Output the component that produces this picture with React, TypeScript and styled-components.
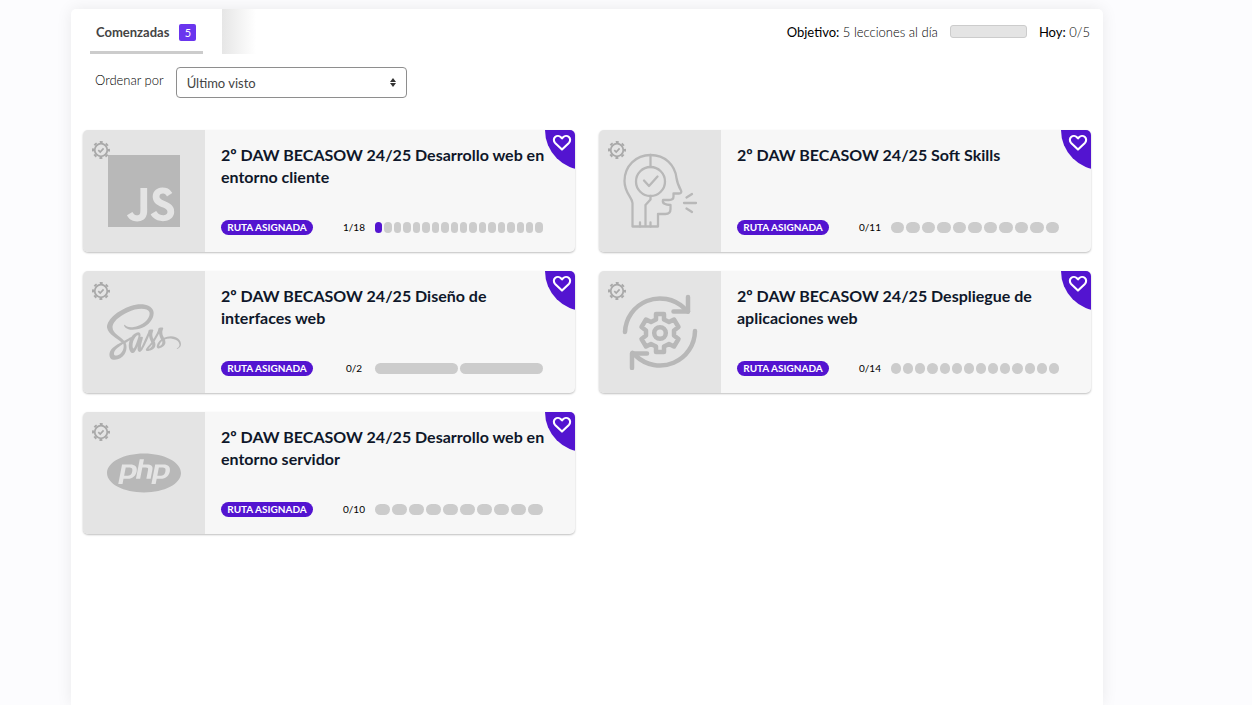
import React from "react";
import styled, { createGlobalStyle } from "styled-components";
import { SiJavascript, SiPhp } from "react-icons/si";
import { FaSass } from "react-icons/fa";

const GlobalStyle = createGlobalStyle`
  *, *::before, *::after { box-sizing: border-box; }
  body {
    margin: 0;
    background: #fcfcfe;
    color: #000;
    font-family: Lato, "Liberation Sans", sans-serif;
    font-size: 13px;
  }
`;

const Page = styled.div`
  padding: 9px 149px 0 71px;
`;

const Panel = styled.main`
  min-height: calc(100vh - 9px);
  background: #fff;
  border-radius: 5px 5px 0 0;
  box-shadow: 0 0 16px rgba(0, 0, 0, 0.08);
`;

const TopBar = styled.header`
  display: flex;
  justify-content: space-between;
  height: 45px;
`;

const Tabs = styled.nav`
  display: flex;
  padding-left: 19px;
`;

const TabShade = styled.div`
  width: 34px;
  margin-left: 19px;
  background: linear-gradient(to right, #e6e6e6, #fff);
`;

const Tab = styled.button`
  display: flex;
  align-items: center;
  gap: 10px;
  padding: 4px 7px 0 6px;
  border: 0;
  border-bottom: 3px solid #ccc;
  background: none;
  color: #444;
  font: 700 13px/18px Lato, sans-serif;
`;

const TabCount = styled.span`
  width: 17px;
  height: 17px;
  border-radius: 2px;
  background: #6a35ee;
  color: #fff;
  font: 400 11px/17px Lato, sans-serif;
`;

const Goal = styled.div`
  display: flex;
  align-items: center;
  gap: 12px;
  padding-right: 13px;
  font-weight: 300;
  font-size: 13px;

  b {
    font-weight: 400;
  }
`;

const GoalBar = styled.div`
  width: 77px;
  height: 13px;
  border: 1px solid #ccc;
  border-radius: 3px;
  background: #e4e4e4;
`;

const SortRow = styled.div`
  display: flex;
  align-items: center;
  gap: 12px;
  padding: 13px 24px 0;
`;

const SortLabel = styled.label`
  padding-bottom: 6px;
  font-weight: 300;
  font-size: 13px;
`;

const SelectBox = styled.div`
  position: relative;
  width: 231px;

  svg {
    position: absolute;
    top: 11px;
    right: 10px;
    pointer-events: none;
  }
`;

const Select = styled.select`
  width: 100%;
  height: 31px;
  padding: 0 10px;
  appearance: none;
  border: 1px solid #8e8e8e;
  border-radius: 4px;
  background: #fff;
  color: #444;
  font: 400 13px Lato, sans-serif;
`;

const Grid = styled.section`
  display: grid;
  grid-template-columns: repeat(2, minmax(0, 1fr));
  gap: 19px 24px;
  padding: 32px 12px;
`;

const Card = styled.article`
  position: relative;
  display: flex;
  min-height: 122px;
  overflow: hidden;
  border-radius: 5px;
  background: #f7f7f7;
  box-shadow: 0 1px 2px rgba(0, 0, 0, 0.25);
`;

const Thumb = styled.div`
  display: flex;
  align-items: center;
  justify-content: center;
  width: 122px;
  background: #e4e4e4;
  color: #b8b8b8;
`;

const Seal = styled.svg`
  position: absolute;
  top: 11px;
  left: 9px;
`;

const Body = styled.div`
  display: flex;
  flex: 1;
  flex-direction: column;
  justify-content: space-between;
  padding: 14px 24px 17px 16px;
`;

const Title = styled.h2`
  margin: 0;
  color: #0f172a;
  font-weight: 700;
  font-size: 16px;
  line-height: 22px;
`;

const Meta = styled.div`
  display: flex;
  align-items: center;
  padding-right: 8px;
`;

const Tag = styled.span`
  width: 92px;
  border-radius: 8px;
  background: #5314d0;
  color: #fff;
  font-weight: 700;
  font-size: 10px;
  line-height: 15px;
  text-align: center;
`;

const Count = styled.span`
  width: 62px;
  padding-left: 20px;
  font-size: 10px;
  line-height: 15px;
  text-align: center;
`;

const Steps = styled.div`
  display: flex;
  flex: 1;
  gap: 2px;
`;

const Step = styled.span<{ $done: boolean }>`
  flex: 1;
  height: 11px;
  border-radius: 6px;
  background: ${(p) => (p.$done ? "#5314d0" : "#ccc")};
`;

const Favorite = styled.button`
  position: absolute;
  top: 0;
  right: -10px;
  display: flex;
  align-items: flex-start;
  width: 40px;
  height: 40px;
  padding: 3px 0 0 7px;
  border: 0;
  border-radius: 0 0 0 100%;
  background: #5314d0;
  color: #fff;
`;

const SealIcon = () => (
  <Seal width="18" height="18" viewBox="0 0 18 18" fill="none" stroke="#a9a9a9">
    <circle cx="9" cy="9" r="6.3" strokeWidth="1.8" />
    <circle cx="9" cy="9" r="8" strokeWidth="2" strokeDasharray="3 3.283" strokeDashoffset="1.5" />
    <path d="M6.3 9.2l1.9 1.8 3.4-3.6" strokeWidth="1.7" />
  </Seal>
);

const HeartIcon = () => (
  <svg width="20" height="20" viewBox="0 0 20 20" fill="none" stroke="#fff" strokeWidth="2.1" strokeLinejoin="round">
    <path d="M10 16.6 3.1 9.900C1.400 8.100 1.500 5.400 3.100 4 4.900 2.400 7.400 2.700 8.900 4.200L10 5.400l1.100-1.200c1.500-1.500 4-1.800 5.800-.2 1.600 1.400 1.700 4.100 0 5.900z" />
  </svg>
);

const HeadIcon = () => (
  <svg width="76" height="76" viewBox="0 0 76 76" fill="none" stroke="currentColor" strokeWidth="2.3" strokeLinecap="round" strokeLinejoin="round">
    <path d="M10.500 73.500V50C10 44 2.500 40 2.500 28 2.500 13 14 2 28.500 2S53 12 54.500 25c.6 5 2 8 4.500 12.500.8 1.700 0 3-2 3h-5.500v3c0 3-2 3.500-4.500 3.500h-6c-1 3.500 2.500 5 7.500 5v4c0 3-1.500 5-5 5H36v12.500H12c-1 0-1.500-.5-1.500-1.500z" />
    <circle cx="28.500" cy="28.500" r="14.500" />
    <path d="M28.500 2v12M28.500 43v3.500L23.500 52v21M22 27.500l5 5.500 8.500-9.500M18 69.500v4M28.500 69.500v4M62 50h12M64.500 44.500l5.500-3.500M64.500 55.500l5.500 3.500" />
  </svg>
);

const CycleIcon = () => (
  <svg width="76" height="76" viewBox="0 0 76 76" fill="none" stroke="currentColor" strokeWidth="4.500" strokeLinecap="round" strokeLinejoin="round">
    <path d="M3 38A35 35 0 0 1 62 14L66 17.500M73 37A35 35 0 0 1 14 62L10.500 59" />
    <path d="M66 3V17.500H51.500M10 74V59.500H25" />
    <circle cx="38" cy="39" r="5.800" />
    <path d="M34 20h8v5.500l5 2.500 5-2.500 4.500 7.500-4.500 3.500v5l4.500 3.500-4.500 7.500-5-2.500-5 2.500V58h-8v-5.500l-5-2.500-5 2.500-4.500-7.500 4.500-3.500v-5L19.500 33l4.500-7.500 5 2.500 5-2.500z" />
  </svg>
);

const courses = [
  { title: "2º DAW BECASOW 24/25 Desarrollo web en entorno cliente", done: 1, total: 18, icon: <SiJavascript size={72} /> },
  { title: "2º DAW BECASOW 24/25 Soft Skills", done: 0, total: 11, icon: <HeadIcon /> },
  { title: "2º DAW BECASOW 24/25 Diseño de interfaces web", done: 0, total: 2, icon: <FaSass size={74} /> },
  { title: "2º DAW BECASOW 24/25 Despliegue de aplicaciones web", done: 0, total: 14, icon: <CycleIcon /> },
  { title: "2º DAW BECASOW 24/25 Desarrollo web en entorno servidor", done: 0, total: 10, icon: <SiPhp size={74} /> },
];

export default function App() {
  return (
    <Page>
      <GlobalStyle />
      <Panel>
        <TopBar>
          <Tabs>
            <Tab type="button">
              Comenzadas <TabCount>5</TabCount>
            </Tab>
            <TabShade />
          </Tabs>
          <Goal>
            <span><b>Objetivo:</b> 5 lecciones al día</span>
            <GoalBar role="progressbar" aria-label="Lecciones de hoy" aria-valuenow={0} aria-valuemax={5} />
            <span><b>Hoy:</b> 0/5</span>
          </Goal>
        </TopBar>
        <SortRow>
          <SortLabel htmlFor="sort">Ordenar por</SortLabel>
          <SelectBox>
            <Select id="sort">
              <option>Último visto</option>
            </Select>
            <svg width="8" height="9" viewBox="0 0 8 9" fill="#333">
              <path d="M4 0l3 4H1zM4 9L1 5h6z" />
            </svg>
          </SelectBox>
        </SortRow>
        <Grid>
          {courses.map((c) => (
            <Card key={c.title}>
              <Thumb>{c.icon}</Thumb>
              <SealIcon />
              <Body>
                <Title>{c.title}</Title>
                <Meta>
                  <Tag>RUTA ASIGNADA</Tag>
                  <Count>{c.done}/{c.total}</Count>
                  <Steps>
                    {Array.from({ length: c.total }, (_, i) => (
                      <Step key={i} $done={i < c.done} />
                    ))}
                  </Steps>
                </Meta>
              </Body>
              <Favorite type="button" aria-label="Favorito">
                <HeartIcon />
              </Favorite>
            </Card>
          ))}
        </Grid>
      </Panel>
    </Page>
  );
}
